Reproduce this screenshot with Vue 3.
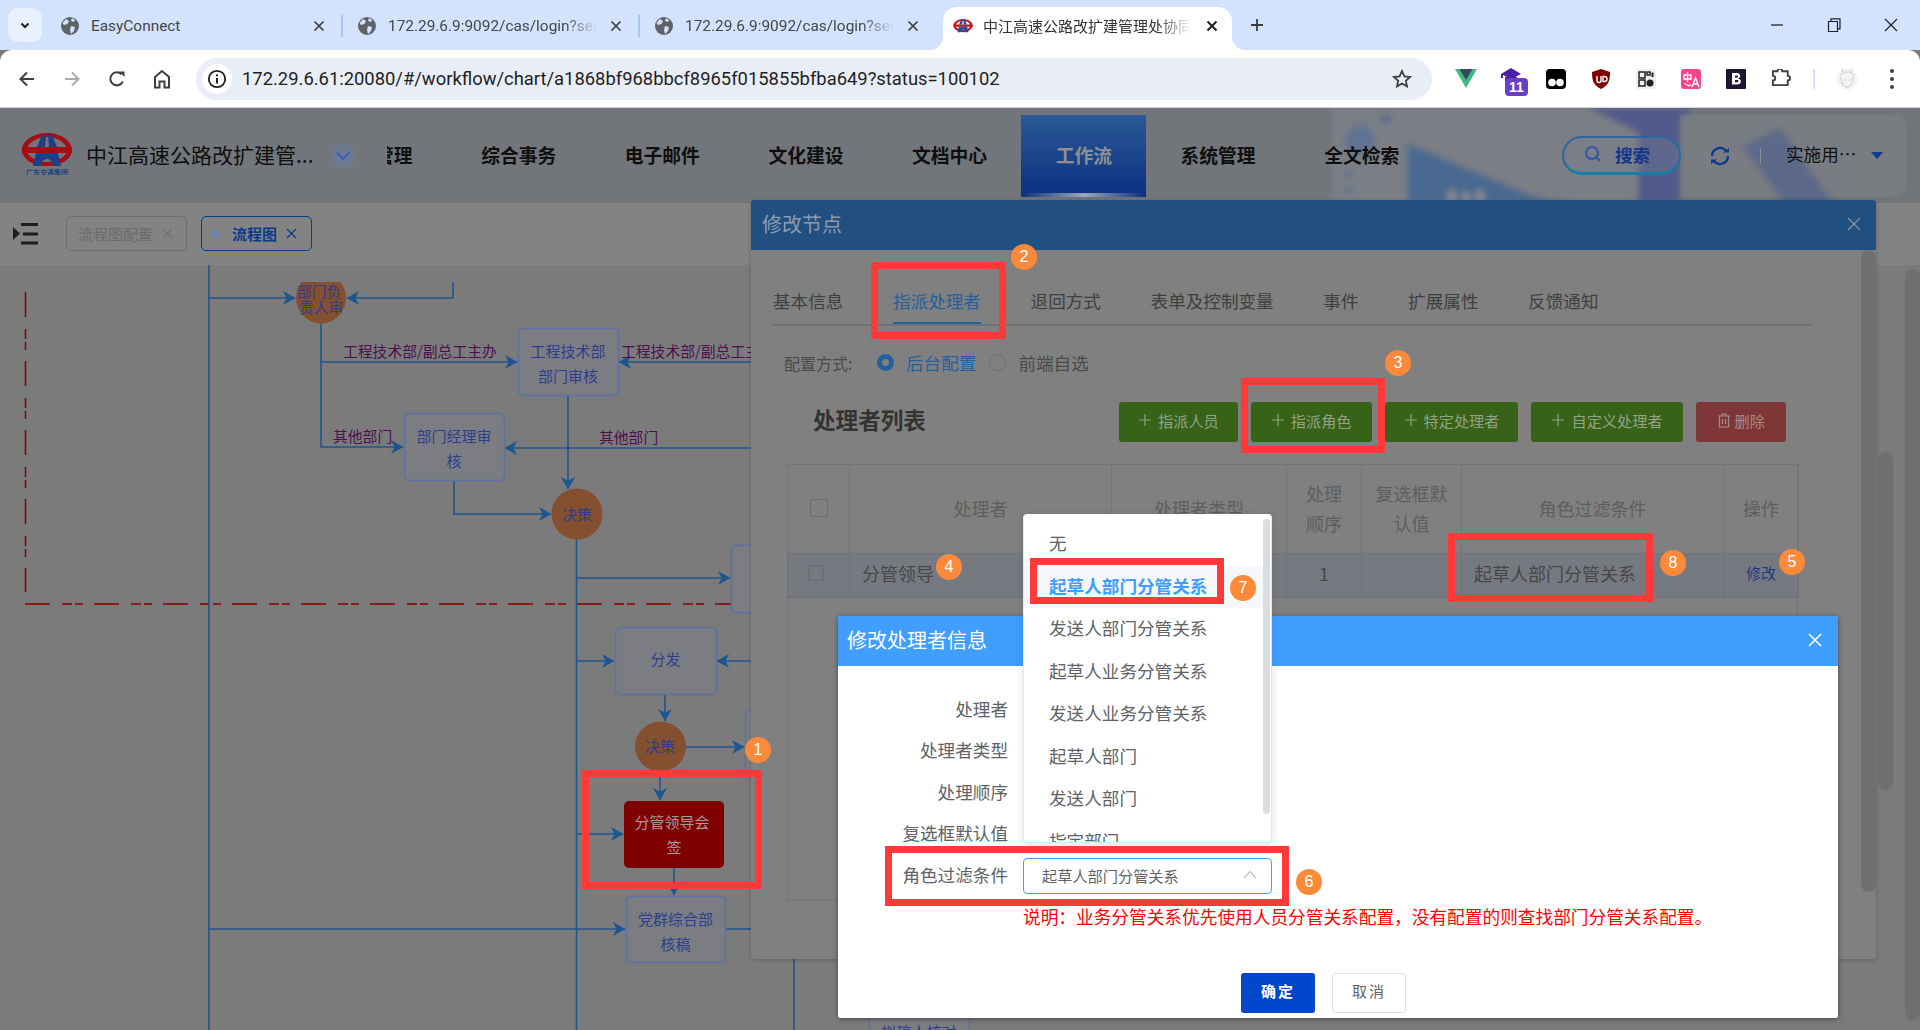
<script setup>
const tabs = [
  { label: 'EasyConnect', fade: false },
  { label: '172.29.6.9:9092/cas/login?service=http', fade: true },
  { label: '172.29.6.9:9092/cas/login?service=http', fade: true },
]
const navItems = ['人事管理', '综合事务', '电子邮件', '文化建设', '文档中心', '工作流', '系统管理', '全文检索']
const nodeTabs = ['基本信息', '指派处理者', '退回方式', '表单及控制变量', '事件', '扩展属性', '反馈通知']
const actionButtons = ['指派人员', '指派角色', '特定处理者', '自定义处理者']
const options = ['无', '起草人部门分管关系', '发送人部门分管关系', '起草人业务分管关系', '发送人业务分管关系', '起草人部门', '发送人部门', '指定部门']
const formLabels = ['处理者', '处理者类型', '处理顺序', '复选框默认值']

const frames = [
  { l: 582, t: 770, r: 762, b: 889 },
  { l: 871, t: 262, r: 1006, b: 339 },
  { l: 1241, t: 378, r: 1385, b: 453 },
  { l: 885, t: 846, r: 1289, b: 906 },
  { l: 1030, t: 558, r: 1224, b: 604 },
  { l: 1448, t: 533, r: 1653, b: 602 },
]
const badges = [
  { n: 1, x: 758, y: 750 }, { n: 2, x: 1024, y: 257 }, { n: 3, x: 1398, y: 363 }, { n: 4, x: 949, y: 567 },
  { n: 5, x: 1792, y: 562 }, { n: 6, x: 1309, y: 882 }, { n: 7, x: 1243, y: 588 }, { n: 8, x: 1673, y: 563 },
]

const plainLines = ['M209 265V1030', 'M576.5 539V1030', 'M794 955V1030', 'M725 929H751']
const arrowLines = [
  'M321 323V447H403', 'M321 362H517', 'M209 298H295', 'M453 282V298H347',
  'M751 362H619', 'M751 448H505', 'M568 395V489', 'M454 480V514H551',
  'M577 578H730', 'M577 661H614', 'M751 661H717', 'M665 694V721',
  'M686 747H744', 'M660 771V800', 'M577 834H623', 'M674 868V895', 'M209 929H625',
]
const boxes = [
  { x: 518, y: 328, w: 100, h: 67, t: ['工程技术部', '部门审核'] },
  { x: 404, y: 413, w: 100, h: 67, t: ['部门经理审', '核'] },
  { x: 731, y: 545, w: 100, h: 67, t: [] },
  { x: 615, y: 627, w: 101, h: 67, t: ['分发'] },
  { x: 745, y: 710, w: 100, h: 67, t: [] },
  { x: 626, y: 896, w: 99, h: 66, t: ['党群综合部', '核稿'] },
  { x: 869, y: 985, w: 100, h: 66, t: [] },
]
const labels = [
  { x: 343, y: 357, t: '工程技术部/副总工主办' },
  { x: 621, y: 357, t: '工程技术部/副总工主办' },
  { x: 333, y: 442, t: '其他部门' },
  { x: 599, y: 443, t: '其他部门' },
]
</script>

<template>
  <div class="screen">
    <!-- browser chrome -->
    <div class="tabstrip">
      <div class="switcher">
        <svg width="12" height="12" viewBox="0 0 12 12"><path d="M2.5 4.5 6 8l3.5-3.5" fill="none" stroke="#1f1f1f" stroke-width="2"/></svg>
      </div>
      <div v-for="(tab, i) in tabs" :key="i" class="tab">
        <svg class="globe" width="18" height="18" viewBox="0 0 18 18">
          <circle cx="9" cy="9" r="9" fill="#5f6368"/>
          <path d="M5 2 8 4 6.500 7 3 8 1.500 6ZM10 9l4 1-1 4-3 3-1-4ZM11 1l3 2-1 2-3-1Z" fill="#d3e3fd"/>
        </svg>
        <span class="tab-label" :class="{ fade: tab.fade }">{{ tab.label }}</span>
        <svg class="tab-x" width="12" height="12" viewBox="0 0 12 12"><path d="M1.500 1.500l9 9m0-9l-9 9" stroke="#3c3c3c" stroke-width="1.700"/></svg>
        <i v-if="i < 2" class="tab-sep"></i>
      </div>
      <div class="tab active">
        <svg class="tab-logo" width="20" height="16" viewBox="0 0 52 36">
          <path d="M1 17C1 8 12 0 26 0s25 8 25 17-11 17-25 17S1 26 1 17Zm6 0c0 6 8 11 19 11s19-5 19-11S37 5 26 5 7 11 7 17Z" fill="#c8161d" fill-rule="evenodd"/>
          <path d="M1 14h50v6H1z" fill="#c8161d"/>
          <path d="M21 2h4l-1 12h-8ZM31 2h-4l1 12h8ZM15 20h22l3 14h-8c-1-5-3-7-6-7s-5 2-6 7h-8Z" fill="#1c4ea8"/>
        </svg>
        <span class="tab-label fade active-label">中江高速公路改扩建管理处协同办公平台</span>
        <svg class="tab-x" width="12" height="12" viewBox="0 0 12 12"><path d="M1.500 1.500l9 9m0-9l-9 9" stroke="#1f1f1f" stroke-width="2"/></svg>
      </div>
      <svg class="new-tab" width="16" height="16" viewBox="0 0 16 16"><path d="M8 2v12M2 8h12" stroke="#3c3c3c" stroke-width="1.800"/></svg>
      <div class="win-controls">
        <svg width="14" height="14" viewBox="0 0 14 14"><path d="M1 7h12" stroke="#222" stroke-width="1.300"/></svg>
        <svg width="14" height="14" viewBox="0 0 14 14"><path d="M1.500 3.500h9v10h-9zM4 3.500V.8h9v10h-2.500" fill="none" stroke="#222" stroke-width="1.200"/></svg>
        <svg width="14" height="14" viewBox="0 0 14 14"><path d="M1 1l12 12m0-12L1 13" stroke="#222" stroke-width="1.200"/></svg>
      </div>
    </div>

    <div class="toolbar">
      <button class="tool"><svg width="18" height="18" viewBox="0 0 18 18"><path d="M16 9H3M9 2.500 2.500 9 9 15.500" fill="none" stroke="#3c4043" stroke-width="2"/></svg></button>
      <button class="tool"><svg width="18" height="18" viewBox="0 0 18 18"><path d="M2 9h13M9 2.500 15.500 9 9 15.500" fill="none" stroke="#a9adb2" stroke-width="2"/></svg></button>
      <button class="tool"><svg width="18" height="18" viewBox="0 0 18 18"><path d="M14.800 11.500A6.500 6.500 0 1 1 13.500 4.300" fill="none" stroke="#3c4043" stroke-width="2"/><path d="M11 1.500h5.500V7Z" fill="#3c4043"/></svg></button>
      <button class="tool"><svg width="18" height="20" viewBox="0 0 18 20"><path d="M2 18.500V8l7-6 7 6v10.500h-4.500v-6h-5v6Z" fill="none" stroke="#3c4043" stroke-width="2"/></svg></button>
      <div class="omnibox">
        <span class="info">
          <svg width="20" height="20" viewBox="0 0 20 20"><circle cx="10" cy="10" r="8.200" fill="none" stroke="#1f1f1f" stroke-width="1.800"/><path d="M10 9v5.500M10 5.500v1.800" stroke="#1f1f1f" stroke-width="2"/></svg>
        </span>
        <span class="url">172.29.6.61:20080/#/workflow/chart/a1868bf968bbcf8965f015855bfba649?status=100102</span>
        <svg class="star" width="20" height="20" viewBox="0 0 20 20"><path d="M10 2l2.400 5.300 5.600.7-4.200 3.800 1.200 5.700-5-3-5 3 1.200-5.700L2 8l5.600-.7Z" fill="none" stroke="#3c4043" stroke-width="1.800"/></svg>
      </div>
      <div class="extensions">
        <span class="ext"><svg width="22" height="19" viewBox="0 0 22 19"><path d="M0 0h22L11 19Z" fill="#42b883"/><path d="M4.500 0h13L11 11Z" fill="#35495e"/></svg></span>
        <span class="ext grad">
          <svg width="22" height="15" viewBox="0 0 22 15"><path d="M11 0 21 6l-10 5L1 6Z" fill="#4a1ea8"/><path d="M5 9h12v6H5zM1 6h2v4H1z" fill="#4a1ea8"/></svg>
          <b class="count">11</b>
        </span>
        <span class="ext"><svg width="20" height="20" viewBox="0 0 20 20"><rect width="20" height="20" rx="4" fill="#000"/><circle cx="6" cy="13.500" r="3.800" fill="#fff"/><circle cx="14" cy="13.500" r="3.800" fill="#fff"/></svg></span>
        <span class="ext"><svg width="18" height="20" viewBox="0 0 18 20"><path d="M9 0l9 3c0 8-1 13-9 17C1 16 0 11 0 3Z" fill="#800000"/><path d="M5 7v4.500a2 2 0 0 0 4 0V7M11 7.500h1.500a2.500 2.500 0 0 1 0 5H11Z" fill="none" stroke="#fff" stroke-width="1.400"/></svg></span>
        <span class="ext"><svg width="20" height="20" viewBox="0 0 20 20"><rect width="20" height="20" rx="2" fill="#eee"/><path d="M3 3h6v6H3zM3 11h6v6H3zM11 3h3v3h-3z" fill="none" stroke="#222" stroke-width="1.500"/><circle cx="14" cy="14" r="3.500" fill="#222"/><path d="M15.500 3.500h2V8h-2z" fill="#222"/></svg></span>
        <span class="ext"><svg width="20" height="20" viewBox="0 0 20 20"><rect width="20" height="20" rx="3" fill="#f0468c"/><path d="M3 6h7v4H3zM6.500 3v10M3.500 14c2 3 4 3 6.500 2" fill="none" stroke="#fff" stroke-width="1.300"/><path d="M11 18l3.500-9 3.500 9m-5.500-3h4" fill="none" stroke="#fff" stroke-width="1.400"/></svg></span>
        <span class="ext"><svg width="20" height="20" viewBox="0 0 20 20"><rect width="20" height="20" rx="1" fill="#1e1530"/><path d="M6 4h5c4 0 4 5 1 5.500 4 .5 4 6-1 6H6Z M9 6.500v2h2c1.500 0 1.500-2 0-2ZM9 11v2.200h2.200c1.700 0 1.700-2.200 0-2.200Z" fill="#fff" fill-rule="evenodd"/></svg></span>
        <span class="ext"><svg width="22" height="20" viewBox="0 0 22 20"><path d="M2 4h5a2.500 2.500 0 0 1 5 0h6v5a2.500 2.500 0 0 1 0 5v5H2v-5a2.500 2.500 0 0 0 0-5Z" transform="translate(1 -1.500) scale(.93)" fill="none" stroke="#3c4043" stroke-width="2"/></svg></span>
      </div>
      <i class="tool-sep"></i>
      <span class="avatar">
        <svg width="22" height="22" viewBox="0 0 22 22"><circle cx="11" cy="11" r="10.500" fill="#f3f3f3"/><path d="M4 8c2-5 12-6 14 0M5 9c0 7 3 10 6 10s6-3 6-10M7 4 6 1M15 4l1-3M8 12h1.500M13 12h1.500" fill="none" stroke="#bdbdbd" stroke-width=".8"/></svg>
      </span>
      <span class="dots"><i></i><i></i><i></i></span>
    </div>

    <!-- application (shown dimmed by the dialog masks) -->
    <header class="app-header">
      <svg class="header-art" width="1920" height="95" viewBox="0 0 1920 95">
        <defs><filter id="soft" x="-10%" y="-10%" width="120%" height="120%"><feGaussianBlur stdDeviation="3"/></filter></defs>
        <g filter="url(#soft)" opacity=".8">
          <path d="M1332 0h348v95h-348z" fill="#7e8187"/>
          <path d="M1587 0h103v7h-10v88h-42V24Z" fill="#4c5390"/>
          <path d="M1407 35 1533 88l40 7h-166Z" fill="#406696"/>
          <circle cx="1360" cy="32" r="15" fill="#5c7398"/>
          <circle cx="1386" cy="11" r="5" fill="#50688f"/>
          <circle cx="1349" cy="67" r="4" fill="#5c7398"/>
          <circle cx="1349" cy="82" r="4" fill="#5c7398"/>
          <path d="M1448 82h8v13h-8zM1462 84h8v11h-8zM1476 82h8v13h-8z" fill="#8c8f94"/>
          <path d="M1780 20 1743 39 1785 95h48Z" fill="#4e5b86"/>
        </g>
      </svg>
      <div class="nav-panel"></div>
      <svg class="logo" width="52" height="42" viewBox="0 0 52 42">
        <path d="M1 17C1 8 12 0 26 0s25 8 25 17-11 16-25 16S1 26 1 17Zm5 0c0 6 9 12 20 12s20-6 20-12S37 4 26 4 6 11 6 17Z" fill="#a50f14" fill-rule="evenodd"/>
        <path d="M1 14h50v6H1z" fill="#a50f14"/>
        <path d="M21 2h4l-1 12h-8ZM31 2h-4l1 12h8ZM15 20h22l3 13h-8c-1-5-3-7-6-7s-5 2-6 7h-8Z" fill="#1c3f85"/>
        <text x="26" y="41.500" text-anchor="middle" class="logo-text">广东交通集团</text>
      </svg>
      <div class="app-title">中江高速公路改扩建管...</div>
      <span class="collapse">
        <svg width="14" height="10" viewBox="0 0 14 10"><path d="M1 1.500 7 8l6-6.500" fill="none" stroke="#3f5db8" stroke-width="2"/></svg>
      </span>
      <nav class="nav">
        <a v-for="item in navItems" :key="item" class="nav-item" :class="{ on: item === '工作流' }">{{ item }}</a>
      </nav>
      <div class="search">
        <svg width="18" height="18" viewBox="0 0 18 18"><circle cx="8" cy="8" r="6" fill="none" stroke="#2d57a5" stroke-width="2"/><path d="M12.500 12.500 16 16" stroke="#2d57a5" stroke-width="2"/></svg>
        <span>搜索</span>
      </div>
      <svg class="refresh" width="22" height="22" viewBox="0 0 22 22"><path d="M3 11a8 8 0 0 1 14-5.300M19 11A8 8 0 0 1 5 16.300" fill="none" stroke="#0e3a8c" stroke-width="2.400"/><path d="M14 7.500h6V3ZM8 14.500H2V19Z" fill="#0e3a8c"/></svg>
      <i class="head-sep"></i>
      <span class="user">实施用…</span>
      <i class="caret"></i>
    </header>

    <div class="tagsbar">
      <svg width="26" height="22" viewBox="0 0 26 22"><path d="M0 4l7 6.500L0 17Z" fill="#1d1d1d"/><path d="M8 1.500h17M10 11h15M8 20h17" stroke="#1d1d1d" stroke-width="3"/></svg>
      <div class="chip">
        <span>流程图配置</span>
        <svg width="11" height="11" viewBox="0 0 11 11"><path d="M1 1l9 9m0-9l-9 9" stroke="#6f6f6f" stroke-width="1.200"/></svg>
      </div>
      <div class="chip current">
        <i class="chip-dot"></i>
        <span>流程图</span>
        <svg width="11" height="11" viewBox="0 0 11 11"><path d="M1 1l9 9m0-9l-9 9" stroke="#0d3b8a" stroke-width="1.300"/></svg>
      </div>
    </div>

    <!-- flowchart canvas -->
    <div class="chart">
      <svg width="1920" height="765" viewBox="0 265 1920 765">
        <defs>
          <marker id="arrow" markerUnits="userSpaceOnUse" markerWidth="13" markerHeight="14" refX="12" refY="7" orient="auto">
            <path d="M0 0 12.500 7 0 14 3.500 7Z" fill="#20568f"/>
          </marker>
          <clipPath id="start-clip"><rect x="280" y="282" width="80" height="50"/></clipPath>
        </defs>
        <path d="M25.500 292V592" class="dash"/>
        <path d="M25 604H751" class="dash"/>
        <ellipse cx="321" cy="298" rx="25" ry="25.500" fill="#85502f" clip-path="url(#start-clip)"/>
        <ellipse cx="577" cy="514" rx="25.500" ry="25.500" fill="#85502f"/>
        <ellipse cx="660.500" cy="746.500" rx="25.500" ry="25" fill="#85502f"/>
        <path v-for="d in plainLines" :key="d" :d="d" class="flow"/>
        <path v-for="d in arrowLines" :key="d" :d="d" class="flow" marker-end="url(#arrow)"/>
        <g v-for="(b, i) in boxes" :key="i">
          <rect :x="b.x + 0.500" :y="b.y + 0.500" :width="b.w" :height="b.h" rx="5" class="box"/>
          <text v-for="(t, j) in b.t" :key="j" :x="b.x + b.w / 2" :y="b.t.length === 1 ? b.y + 38 : b.y + 29 + j * 25" text-anchor="middle" class="node-text">{{ t }}</text>
        </g>
        <text x="297" y="297" class="node-text small">部门负</text>
        <text x="299" y="313" class="node-text small">责人审</text>
        <text x="577" y="520" text-anchor="middle" class="node-text">决策</text>
        <text x="660" y="752" text-anchor="middle" class="node-text">决策</text>
        <text v-for="(l, i) in labels" :key="i" :x="l.x" :y="l.y" class="edge-text">{{ l.t }}</text>
        <rect x="624" y="801" width="100" height="67" rx="5" fill="#7f0000"/>
        <text x="672" y="828" text-anchor="middle" class="node-text hot">分管领导会</text>
        <text x="674" y="853" text-anchor="middle" class="node-text hot">签</text>
        <text x="919" y="1038" text-anchor="middle" class="node-text">拟稿人核对</text>
      </svg>
    </div>

    <i class="page-thumb outer"></i>
    <i class="page-thumb inner"></i>

    <!-- node dialog -->
    <section class="node-dialog">
      <header class="node-head">
        <span>修改节点</span>
        <svg width="14" height="14" viewBox="0 0 14 14"><path d="M1 1l12 12m0-12L1 13" stroke="#8492a3" stroke-width="1.300"/></svg>
      </header>
      <div class="node-tabs">
        <a v-for="t in nodeTabs" :key="t" class="node-tab" :class="{ on: t === '指派处理者' }">{{ t }}</a>
      </div>
      <div class="config-row">
        <span class="config-label">配置方式:</span>
        <i class="radio checked"></i><span class="radio-on">后台配置</span>
        <i class="radio"></i><span>前端自选</span>
      </div>
      <div class="list-head">
        <h3>处理者列表</h3>
        <div class="actions">
          <button v-for="b in actionButtons" :key="b" class="btn">
            <svg width="14" height="14" viewBox="0 0 14 14"><path d="M7 1v12M1 7h12" stroke="#8fa382" stroke-width="1.200"/></svg>
            <span>{{ b }}</span>
          </button>
          <button class="btn danger">
            <svg width="14" height="15" viewBox="0 0 14 15"><path d="M1 3h12M5 3V1h4v2M2.500 3v11h9V3M5.500 6v5M8.500 6v5" fill="none" stroke="#a98a8a" stroke-width="1.200"/></svg>
            <span>删除</span>
          </button>
        </div>
      </div>
      <div class="table-wrap">
        <table>
          <colgroup><col style="width:62px"><col style="width:262px"><col style="width:175px"><col style="width:75px"><col style="width:100px"><col style="width:262px"><col style="width:75px"></colgroup>
          <thead>
            <tr>
              <th><i class="check"></i></th>
              <th>处理者</th>
              <th>处理者类型</th>
              <th>处理<br>顺序</th>
              <th>复选框默<br>认值</th>
              <th>角色过滤条件</th>
              <th>操作</th>
            </tr>
          </thead>
          <tbody>
            <tr>
              <td class="mid"><i class="check small"></i></td>
              <td>分管领导</td>
              <td></td>
              <td class="mid">1</td>
              <td></td>
              <td>起草人部门分管关系</td>
              <td class="mid link">修改</td>
            </tr>
          </tbody>
        </table>
      </div>
      <i class="node-thumb"></i>
    </section>

    <!-- handler dialog -->
    <section class="handler-dialog">
      <header class="handler-head">
        <span>修改处理者信息</span>
        <svg width="14" height="14" viewBox="0 0 14 14"><path d="M1 1l12 12m0-12L1 13" stroke="#fff" stroke-width="1.500"/></svg>
      </header>
      <div class="form">
        <div v-for="l in formLabels" :key="l" class="form-row"><label>{{ l }}</label></div>
        <div class="form-row">
          <label>角色过滤条件</label>
          <div class="select">
            <span>起草人部门分管关系</span>
            <svg width="14" height="9" viewBox="0 0 14 9"><path d="M1 8l6-6.500L13 8" fill="none" stroke="#c0c4cc" stroke-width="1.300"/></svg>
          </div>
        </div>
        <p class="note">说明：业务分管关系优先使用人员分管关系配置，没有配置的则查找部门分管关系配置。</p>
      </div>
      <footer class="handler-foot">
        <button class="ok">确定</button>
        <button class="cancel">取消</button>
      </footer>
    </section>

    <!-- dropdown -->
    <div class="dropdown">
      <div v-for="o in options" :key="o" class="option" :class="{ on: o === '起草人部门分管关系' }">{{ o }}</div>
      <i class="drop-thumb"></i>
    </div>

    <!-- annotations -->
    <i v-for="(f, i) in frames" :key="i" class="frame" :style="{ left: f.l + 'px', top: f.t + 'px', width: f.r - f.l + 'px', height: f.b - f.t + 'px' }"></i>
    <b v-for="b in badges" :key="b.n" class="badge" :style="{ left: b.x - 13 + 'px', top: b.y - 13 + 'px' }">{{ b.n }}</b>
  </div>
</template>

<style>
html, body { margin: 0; overflow: hidden; background: #7a7a7a; }
</style>

<style scoped>
.screen { position: relative; width: 1920px; height: 1030px; overflow: hidden; display: flex; flex-direction: column; font-family: "Noto Sans CJK SC", "Noto Sans", sans-serif; background: #7a7a7a; }
i { display: block; font-style: normal; }
button { font-family: inherit; border: 0; padding: 0; }

/* tab strip */
.tabstrip { height: 50px; flex: none; background: #d3e3fd; display: flex; align-items: flex-end; position: relative; font-family: Roboto, "Noto Sans CJK SC", sans-serif; }
.switcher { position: absolute; left: 8px; top: 8px; width: 34px; height: 34px; border-radius: 10px; background: #e9f1fe; display: flex; align-items: center; justify-content: center; }
.tab { position: relative; width: 297px; height: 43px; flex: none; display: flex; align-items: center; box-sizing: border-box; padding: 0 18px 6px 15px; }
.tabstrip .tab:nth-child(2) { margin-left: 46px; }
.globe { flex: none; }
.tab-label { flex: none; width: 209px; margin-left: 12px; font-size: 15.400px; color: #444746; white-space: nowrap; overflow: hidden; }
.tab-label.fade { -webkit-mask-image: linear-gradient(90deg, #000 84%, transparent); mask-image: linear-gradient(90deg, #000 84%, transparent); }
.tab-x { margin-left: auto; flex: none; }
.tab-sep { position: absolute; right: 0; top: 8px; width: 2px; height: 22px; background: #a9c7f5; }
.tab.active { width: 289px; margin-left: 6px; background: #fff; border-radius: 14px 14px 0 0; padding: 0 14px 6px 10px; }
.tab.active::before, .tab.active::after { content: ""; position: absolute; bottom: 0; width: 14px; height: 14px; }
.tab.active::before { left: -14px; background: radial-gradient(circle at 0 0, transparent 14px, #fff 14.500px); }
.tab.active::after { right: -14px; background: radial-gradient(circle at 100% 0, transparent 14px, #fff 14.500px); }
.tab-logo { flex: none; }
.tab.active .active-label { margin-left: 10px; color: #333; width: 208px; font-size: 15px; }
.new-tab { position: absolute; left: 1249px; top: 17px; }
.win-controls { position: absolute; left: 1770px; top: 18px; width: 128px; display: flex; justify-content: space-between; }

/* toolbar */
.toolbar { height: 58px; flex: none; box-sizing: border-box; background: #fff; border-radius: 12px 12px 0 0; border-bottom: 1px solid #d5d5d5; display: flex; align-items: center; padding-left: 11px; }
.tool { width: 32px; height: 32px; background: none; margin-right: 13px; display: flex; align-items: center; justify-content: center; }
.tool:nth-child(4) { margin-right: 0; }
.omnibox { width: 1236px; height: 42px; margin-left: 18px; border-radius: 21px; background: #e9edf6; display: flex; align-items: center; padding-left: 6px; box-sizing: border-box; }
.info { width: 30px; height: 30px; border-radius: 50%; background: #fff; display: flex; align-items: center; justify-content: center; flex: none; }
.url { margin-left: 10px; font-family: Roboto, sans-serif; font-size: 18.400px; color: #1f1f1f; white-space: nowrap; }
.star { margin-left: auto; margin-right: 20px; flex: none; }
.extensions { display: flex; margin-left: 11px; }
.ext { width: 45px; display: flex; justify-content: center; align-items: center; position: relative; }
.grad svg { margin-top: -6px; }
.count { position: absolute; left: 17px; top: 9px; width: 23px; height: 18px; border-radius: 4px; background: #6c3ec5; color: #fff; font: 700 14px/18px "Liberation Sans", sans-serif; text-align: center; }
.tool-sep { width: 2px; height: 20px; background: #d3e3fd; margin-left: 10px; }
.avatar { margin-left: 21px; display: flex; }
.dots { margin-left: 22px; width: 24px; display: flex; flex-direction: column; align-items: center; gap: 4px; }
.dots i { width: 4px; height: 4px; border-radius: 50%; background: #3c4043; }

/* application header */
.app-header { position: relative; height: 95px; flex: none; background: #72767b; display: flex; align-items: center; overflow: hidden; }
.header-art { position: absolute; left: 0; top: 0; }
.nav-panel { position: absolute; left: 1680px; top: 7px; width: 226px; height: 82px; border-radius: 0 12px 12px 0; background: rgba(255, 255, 255, .05); }
.logo { position: relative; flex: none; margin-left: 21px; margin-top: -3px; }
.logo-text { font-size: 7px; font-weight: 700; fill: #1c3f85; }
.app-title { position: relative; width: 226px; margin-left: 13px; font-size: 21px; color: #0e0e0e; white-space: nowrap; padding-bottom: 3px; }
.collapse { position: relative; flex: none; margin-left: 19px; width: 24px; height: 24px; border-radius: 50%; background: #6d7893; display: flex; align-items: center; justify-content: center; }
.nav { position: relative; width: 1046.500px; margin-left: 32px; flex: none; overflow: hidden; display: flex; justify-content: flex-end; }
.nav-item { flex: none; position: relative; padding: 0 34.250px; height: 82px; line-height: 79px; font-size: 18.800px; font-weight: 700; color: #0f0f0f; white-space: nowrap; }
.nav-item.on { color: #8f8f8f; background: linear-gradient(180deg, #2b5a97, #0a2f7f); }
.nav-item.on::after { content: ""; position: absolute; left: 0; right: 0; bottom: 0; height: 4px; background: linear-gradient(90deg, transparent, #9aa6bb, transparent); }
.search { position: relative; flex: none; margin-left: 128.500px; width: 119px; height: 39px; box-sizing: border-box; border-radius: 20px; border: 2px solid #2f64a0; border-bottom: 3px solid #157ea6; border-right-color: #1f709f; display: flex; align-items: center; padding: 0 0 2px 20px; gap: 13px; background: rgba(120, 125, 142, .35); color: #14358a; font-size: 17.600px; font-weight: 700; }
.refresh { position: relative; flex: none; margin-left: 28px; }
.head-sep { position: relative; width: 1px; height: 16px; background: #8b8f94; margin-left: 29px; flex: none; }
.user { position: relative; margin-left: 25px; font-size: 17.600px; color: #0f0f0f; width: 85px; white-space: nowrap; padding-bottom: 4px; }
.caret { position: relative; width: 0; height: 0; border: 6px solid transparent; border-top: 7px solid #0e3a8c; border-bottom: 0; flex: none; }

/* tags */
.tagsbar { height: 62px; flex: none; background: #838383; display: flex; align-items: center; box-sizing: border-box; padding-left: 13px; }
.chip { height: 35px; margin-left: 27px; box-sizing: border-box; width: 121px; border: 1px solid #6e6e6e; border-radius: 5px; display: flex; align-items: center; gap: 9px; padding-left: 11px; color: #6c6c6c; font-size: 15px; margin-top: -1px; }
.chip.current { margin-left: 14px; width: 111px; border-color: #0d3b8a; color: #0d3b8a; font-weight: 700; padding-left: 10px; }
.chip-dot { width: 8px; height: 8px; border-radius: 50%; background: #6f82ad; margin-right: 3px; }

/* chart */
.chart { flex: 1; background: #7b7b7b; overflow: hidden; }
.chart svg { display: block; }
.dash { fill: none; stroke: #8a0000; stroke-width: 1.500; stroke-dasharray: 25 12 10 3 8 11; }
.flow { fill: none; stroke: #20568f; stroke-width: 1.600; }
.box { fill: #7b7d82; stroke: #5a72a4; stroke-width: 1.500; }
.node-text { font-size: 15px; fill: #2d3d8c; }
.node-text.small { font-size: 14.700px; }
.node-text.hot { fill: #a89a9a; }
.edge-text { font-size: 14.800px; fill: #4b0f50; }

.page-thumb { position: absolute; width: 15px; border-radius: 8px; background: #6f6f6f; }
.page-thumb.outer { left: 1905px; top: 269px; height: 751px; }
.page-thumb.inner { left: 1878px; top: 452px; height: 338px; }

/* node dialog */
.node-dialog { position: absolute; left: 751px; top: 200px; width: 1125px; height: 759px; background: #808080; border-radius: 3px; box-shadow: 0 1px 4px rgba(0, 0, 0, .2); display: flex; flex-direction: column; color: #454545; }
.node-head { height: 50px; flex: none; box-sizing: border-box; padding: 0 15px 3px 11px; background: #204f80; border-radius: 3px 3px 0 0; display: flex; align-items: center; justify-content: space-between; color: #8e9cb0; font-size: 20px; }
.node-tabs { margin: 30px 65px 0 22px; height: 46px; flex: none; box-sizing: border-box; display: flex; gap: 49.600px; border-bottom: 2px solid #6d7278; font-size: 17.600px; line-height: 42px; color: #3f3f3f; }
.node-tab { position: relative; white-space: nowrap; height: 44px; }
.node-tab.on { color: #24609e; }
.node-tab.on::after { content: ""; position: absolute; left: 0; right: 0; bottom: 0; height: 2px; background: #24609e; }
.config-row { margin: 24px 0 0 33px; height: 28px; box-sizing: border-box; padding-bottom: 3px; display: flex; align-items: center; font-size: 17.600px; color: #4a4a4a; flex: none; }
.config-label { width: 76px; font-size: 16px; }
.radio { flex: none; box-sizing: content-box; width: 15px; height: 15px; border: 1px solid #707070; border-radius: 50%; margin: 0 12px 0 13px; }
.radio.checked { border: 5px solid #24609e; width: 7px; height: 7px; background: #808080; margin: 0 12px 0 17px; }
.radio-on { color: #24609e; }
.list-head { margin: 24px 0 0 62px; height: 40px; display: flex; align-items: center; flex: none; }
.list-head h3 { margin: 0 0 6px; width: 306px; font-size: 22.600px; font-weight: 700; color: #333; }
.actions { display: flex; gap: 13px; }
.btn { height: 40px; box-sizing: border-box; padding: 0 19px 4px; border-radius: 3px; background: #376217; color: #93a388; font-size: 15.200px; display: flex; align-items: center; gap: 6px; white-space: nowrap; }
.btn:nth-child(2), .btn:nth-child(4) { padding: 0 20px 4px; }
.btn.danger { background: #7f3636; color: #a98a8a; gap: 4px; padding: 0 21px 4px; }
.table-wrap { margin: 22px 0 0 36px; width: 1011px; height: 437px; box-sizing: border-box; border: 1px solid #757575; flex: none; }
table { border-collapse: collapse; table-layout: fixed; width: 1011px; margin: -1px; font-size: 18px; }
th { height: 89px; box-sizing: border-box; font-weight: 400; color: #5e5e5e; line-height: 30px; border: 1px solid #757575; text-align: center; padding: 0 0 2px; }
td { height: 44px; box-sizing: border-box; background: #767a80; color: #464646; border: 1px solid #6e7278; padding: 0 12px 6px; white-space: nowrap; }
td.mid { text-align: center; padding: 0 0 6px; }
td.link { color: #1d3a85; font-size: 15px; }
.check { width: 16px; height: 16px; margin: 0 auto; border: 1px solid #6c6c6c; border-radius: 2px; }
.check.small { width: 14px; height: 14px; transform: translateX(-3px); }
.node-thumb { position: absolute; right: 0; top: 50px; width: 15px; height: 642px; border-radius: 8px; background: #707070; }

/* handler dialog */
.handler-dialog { position: absolute; left: 838px; top: 616px; width: 1000px; height: 402px; background: #fff; border-radius: 2px; box-shadow: 0 1px 5px rgba(0, 0, 0, .45); display: flex; flex-direction: column; }
.handler-head { height: 50px; flex: none; box-sizing: border-box; padding: 0 16px 3px 9px; background: #409eff; display: flex; align-items: center; justify-content: space-between; color: #fff; font-size: 20px; }
.form { padding-top: 23px; flex: none; }
.form-row { height: 41.500px; display: flex; align-items: center; }
.form-row label { width: 170px; text-align: right; font-size: 17.600px; color: #606266; flex: none; padding-bottom: 3px; }
.select { margin-left: 15px; width: 249px; height: 36px; box-sizing: border-box; border: 1px solid #409eff; border-radius: 4px; display: flex; align-items: center; justify-content: space-between; padding: 0 14px 2px 18px; font-size: 15.200px; color: #606266; }
.note { margin: 5px 0 0 185px; line-height: 28px; font-size: 17.680px; color: #f00; white-space: nowrap; }
.handler-foot { margin-top: auto; padding: 0 29px 5px 0; display: flex; justify-content: center; gap: 17px; }
.handler-foot button { width: 74px; height: 40px; box-sizing: border-box; padding-bottom: 5px; border-radius: 3px; font-size: 15px; letter-spacing: 2px; }
.ok { background: #0047cc; color: #fff; font-weight: 700; }
.cancel { background: #fff; color: #606266; border: 1px solid #dcdfe6; }

/* dropdown */
.dropdown { position: absolute; left: 1023px; top: 514px; width: 249px; height: 329px; box-sizing: border-box; padding-top: 9px; background: #fff; border: 1px solid #e4e7ed; border-width: 0 1px 1px; border-radius: 4px; box-shadow: 0 2px 10px rgba(0, 0, 0, .12); overflow: hidden; }
.option { height: 42.500px; line-height: 40px; padding-left: 25px; font-size: 17.600px; color: #606266; white-space: nowrap; }
.option.on { background: #f5f7fa; color: #409eff; font-weight: 700; }
.drop-thumb { position: absolute; left: 239px; top: 5px; width: 7px; height: 295px; border-radius: 4px; background: #dcdde0; }

/* annotations */
.frame { position: absolute; box-sizing: border-box; border: 7px solid #ff3838; pointer-events: none; }
.badge { position: absolute; width: 26px; height: 26px; border-radius: 50%; background: #fd8a3a; color: #fff; font: 400 16px/26px "Liberation Sans", sans-serif; text-align: center; }
</style>
